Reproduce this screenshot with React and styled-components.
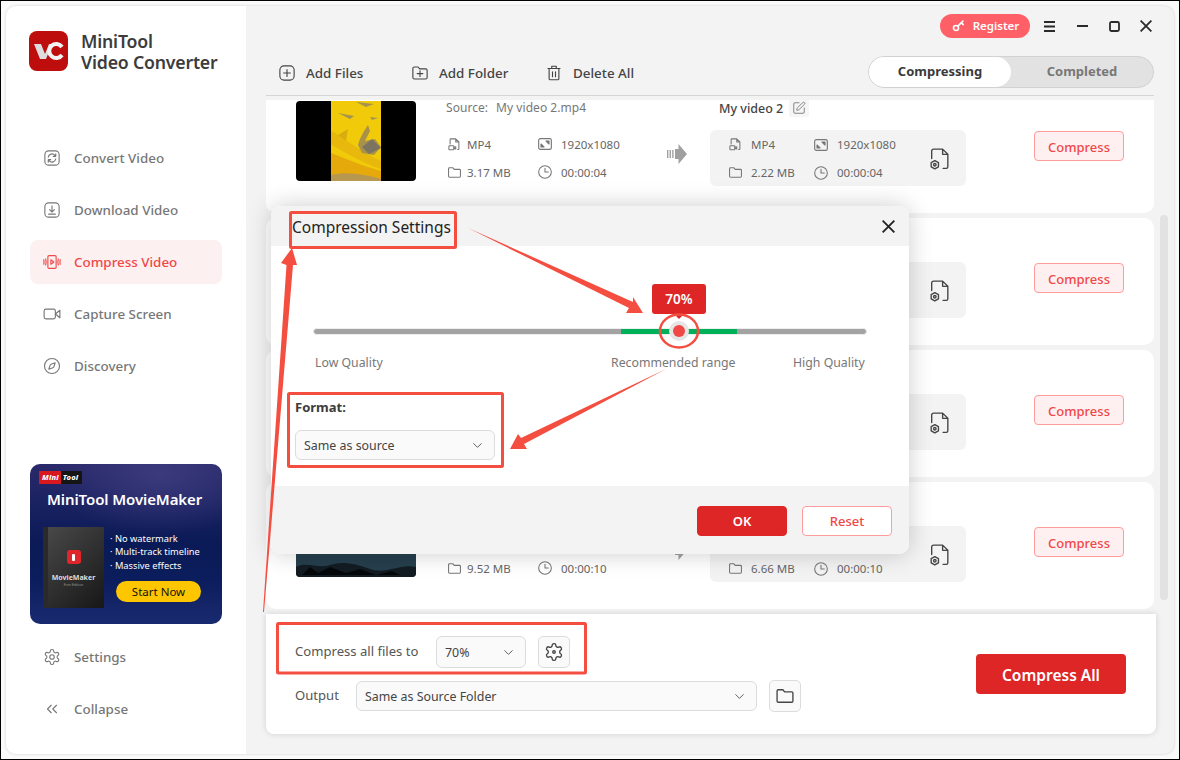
import React from "react";
import styled, { createGlobalStyle } from "styled-components";
import { ChevronDown, ChevronsLeft, SquarePen, Compass } from "lucide-react";

const FONT = `"Noto Sans", "Open Sans", Arial, sans-serif`;

const Global = createGlobalStyle`
  html, body { margin: 0; padding: 0; width: 1180px; height: 760px; overflow: hidden; background: #fff; }
  * { box-sizing: border-box; }
  body { font-family: ${FONT}; }
`;

const Frame = styled.div`
  position: relative; width: 1180px; height: 760px; padding: 6px;
  background: #fafafa; box-shadow: inset 0 0 0 1px #000; overflow: hidden;
`;
const Win = styled.div`
  display: flex; width: 100%; height: 100%; border-radius: 10px; overflow: hidden;
  background: #f3f3f3; box-shadow: 0 0 3px rgba(0,0,0,.18);
`;
const Sidebar = styled.aside`
  width: 240px; background: #fff; padding: 25px 24px 23px; display: flex; flex-direction: column; flex: none;
`;
const Brand = styled.div`display: flex; align-items: center; gap: 13px; height: 40px; margin-left: -1px;`;
const BrandName = styled.div`
  font-size: 17.7px; font-weight: 600; line-height: 21px; color: #3c3c3c; white-space: nowrap; letter-spacing: -.2px; padding-top: 1px;
`;
const Nav = styled.nav`display: flex; flex-direction: column; gap: 8px; margin-top: 65px;`;
const FootNav = styled(Nav)`margin-top: 0;`;
const NavItem = styled.div`
  display: flex; align-items: center; gap: 13px; height: 44px; padding-left: 13px; border-radius: 8px;
  font-size: 13.4px; font-weight: 500; white-space: nowrap;
  color: ${p => (p.$active ? "#f04747" : "#777")};
  background: ${p => (p.$active ? "#fdf0f0" : "transparent")};
  & > svg { flex: none; }
`;
const Banner = styled.div`
  margin-top: auto; margin-bottom: 11px; height: 160px; border-radius: 10px; overflow: hidden; color: #fff;
  padding: 7px 9px 0; display: flex; flex-direction: column;
  background:
    radial-gradient(ellipse 110px 60px at 130px 10px, #3a3a7c 0%, rgba(58,58,124,0) 100%),
    linear-gradient(180deg, #2a2a6b 0%, #0a1a56 50%, #0b1d5c 72%, #1a2a70 100%);
`;
const Badge = styled.div`display: flex; width: max-content; font-size: 7.5px; font-weight: 800; font-style: italic; line-height: 13px; letter-spacing: .2px;`;
const BadgeRed = styled.span`background: #d8181f; padding: 0 2px 0 3px;`;
const BadgeBlack = styled.span`background: #151515; padding: 0 4px 0 2px;`;
const BannerTitle = styled.div`font-size: 15px; font-weight: 600; margin: 5px 0 0 8px; line-height: 20px; white-space: nowrap; letter-spacing: -.1px;`;
const BannerRow = styled.div`display: flex; margin: 18px 0 0 4px;`;
const Box = styled.div`
  position: relative; width: 61px; height: 81px; flex: none; border-radius: 1px; display: flex; flex-direction: column; align-items: center;
  background: linear-gradient(135deg, #4a4a4a 0%, #333 45%, #171717 100%); padding-top: 23px;
  &::before { content: ""; position: absolute; left: 0; top: 0; bottom: 0; width: 5px; background: #2a2a2a; }
`;
const BoxIcon = styled.div`
  width: 14px; height: 14px; border-radius: 3px; background: #e0262a; display: flex; align-items: center; justify-content: center;
  &::after { content: ""; width: 3px; height: 7px; background: #fff; border-radius: 1px; }
`;
const BoxName = styled.div`font-size: 7px; font-weight: 700; margin-top: 9px; color: #ddd; line-height: 9px;`;
const BoxSub = styled.div`font-size: 3.5px; color: #999; line-height: 6px;`;
const Bullets = styled.div`margin-left: 6px; padding-top: 5px; display: flex; flex-direction: column; flex: 1;`;
const Bullet = styled.div`font-size: 9.3px; line-height: 13.4px; white-space: nowrap;`;
const StartNow = styled.div`
  width: 85px; height: 21px; border-radius: 11px; background: #fec600; color: #111; font-size: 11.5px;
  display: flex; align-items: center; justify-content: center; margin: 8.500px 0 0 6px;
`;
const Main = styled.main`
  flex: 1; min-width: 0; padding: 8px 20px 20px; display: flex; flex-direction: column;
`;
const TitleBar = styled.div`display: flex; justify-content: flex-end; align-items: center; height: 24px; margin-right: -8px;`;
const Register = styled.div`
  width: 90px; height: 24px; border-radius: 12px; background: #ff6068; color: #fff; font-size: 11.5px; font-weight: 600;
  display: flex; align-items: center; justify-content: center; gap: 7px; margin-right: 4px; padding-bottom: 1px;
`;
const WinBtn = styled.div`width: 32px; height: 24px; display: flex; align-items: center; justify-content: center; color: #2a2a2a;`;
const Toolbar = styled.div`
  display: flex; align-items: center; height: 40px; margin-top: 18px; padding: 0 0 7px 12px; border-bottom: 1px solid #d6d6d6;
`;
const ToolBtn = styled.div`
  display: flex; align-items: center; gap: 10px; width: ${p => p.$w}px; font-size: 13.4px; font-weight: 500; color: #444; white-space: nowrap; padding-top: 1px;
`;
const Tabs = styled.div`
  margin-left: auto; width: 286px; height: 32px; display: flex; border-radius: 16px; background: #e2e2e2; border: 1px solid #d2d2d2;
`;
const Tab = styled.div`
  width: 142px; border-radius: 16px; display: flex; align-items: center; justify-content: center; padding-bottom: 2px;
  font-size: 13px; font-weight: 700; color: ${p => (p.$active ? "#3a3a3a" : "#777")};
  background: ${p => (p.$active ? "#fff" : "transparent")};
`;
const ListArea = styled.div`position: relative; height: 510px; margin-top: 4px; display: flex; flex-direction: column;`;
const List = styled.div`overflow: hidden; height: 100%;`;
const ListInner = styled.div`display: flex; flex-direction: column; gap: 5px; margin-top: -14px;`;
const ScrollBar = styled.div`
  position: absolute; left: 894px; top: 115px; width: 8px; height: 385px; border-radius: 4px; background: #e2e2e2;
`;
const Card = styled.section`
  display: flex; align-items: flex-start; height: 127px; padding-left: 30px; background: #fff; border-radius: 10px; flex: none;
`;
const Thumb = styled.svg`width: 120px; height: 80px; margin-top: 15px; border-radius: 4px; flex: none; display: block;`;
const Column = styled.div`padding-top: 12px; flex: none; width: ${p => p.$w}px; margin-left: ${p => p.$ml || 0}px;`;
const SourceLine = styled.div`font-size: 12px; line-height: 20px; color: #777; height: 20px; white-space: nowrap; display: flex; gap: 8px; letter-spacing: .05px;`;
const OutName = styled.div`
  height: 20px; padding-left: 9px; display: flex; align-items: center; gap: 6px; font-size: 12.5px; font-weight: 500; color: #444; white-space: nowrap;
`;
const EditBox = styled.div`width: 20px; height: 18px; border-radius: 3px; background: #f5f5f5; color: #777; display: flex; align-items: center; justify-content: center;`;
const Meta = styled.div`
  display: grid; grid-template-columns: ${p => p.$cols}px auto; grid-auto-rows: 28px; margin-top: 12px; margin-left: 1px; width: max-content;
`;
const MetaItem = styled.div`
  display: flex; align-items: center; gap: ${p => p.$gap}px; font-size: 11.5px; color: #666; white-space: nowrap;
  & > svg { flex: none; color: #777; }
`;
const ArrowCell = styled.div`flex: none; width: 54px; padding: 58px 0 0 11px; color: #a0a0a0;`;
const OutPanel = styled.div`
  display: flex; align-items: center; height: 56px; margin-top: 12px; padding: 1px 14px 0 18px; border-radius: 6px; background: #f3f3f3;
`;
const OutMeta = styled(Meta)`margin: 0;`;
const CogWrap = styled.div`margin-left: auto; color: #444; display: flex;`;
const CompressBtn = styled.div`
  width: 90px; height: 30px; margin: 45px 0 0 68px; flex: none; border: 1px solid #ff9c9c; border-radius: 4px; background: #fef0f0; padding-top: 1px;
  color: #f04747; font-size: 13px; font-weight: 500; display: flex; align-items: center; justify-content: center;
`;
const Bottom = styled.div`
  height: 120px; margin: 4px -2px 0 0; background: #fff; border-radius: 0 0 8px 8px; display: flex; align-items: center; justify-content: space-between;
  padding: 0 30px 0 29px; box-shadow: 0 0 6px rgba(0,0,0,.14); position: relative; flex: none;
`;
const Rows = styled.div`display: flex; flex-direction: column; gap: 12px;`;
const FormRow = styled.div`display: flex; align-items: center; height: 32px;`;
const FieldLabel = styled.div`width: ${p => p.$w}px; font-size: 13.1px; color: #555; white-space: nowrap; flex: none; padding-bottom: 2px;`;
const Select = styled.div`
  width: ${p => p.$w}px; height: ${p => p.$h}px; flex: none; display: flex; align-items: center; justify-content: space-between;
  padding: 0 9px 0 8px; background: #fafafa; border: 1px solid #dcdcdc; border-radius: 6px; font-size: 12.4px; color: #444; white-space: nowrap;
  & > svg { color: #555; flex: none; }
`;
const SquareBtn = styled.div`
  width: 32px; height: 32px; margin-left: 12px; flex: none; background: #fafafa; border: 1px solid #dcdcdc; border-radius: 5px; color: #444;
  display: flex; align-items: center; justify-content: center;
`;
const CompressAll = styled.div`
  width: 150px; height: 40px; border-radius: 4px; background: #de2626; color: #fff; font-size: 15.5px; font-weight: 600; padding-top: 1px;
  display: flex; align-items: center; justify-content: center; white-space: nowrap;
`;
const Dialog = styled.div`
  position: absolute; left: 271px; top: 206px; width: 638px; height: 348px; border-radius: 10px; overflow: hidden; background: #fff;
  display: flex; flex-direction: column;
`;
const DialogShadow = styled.div`
  position: absolute; left: 271px; top: 206px; width: 638px; height: 348px; border-radius: 10px; box-shadow: 0 0 24px rgba(0,0,0,.2);
`;
const DHead = styled.div`
  height: 40px; flex: none; background: #f3f3f3; display: flex; align-items: center; justify-content: space-between; padding: 1px 14px 0 21px;
  font-size: 15.5px; color: #222; white-space: nowrap; font-weight: 400;
`;
const DBody = styled.div`height: 240px; flex: none; padding: 82px 42px 0 24px;`;
const TrackWrap = styled.div`position: relative; height: 7px; margin-left: 18px;`;
const Track = styled.div`
  height: 7px; border-radius: 4px; background: #a3a3a3; border: 1px solid #eee; position: relative; overflow: hidden;
`;
const GreenRange = styled.div`position: absolute; left: 307px; width: 116px; top: 0; bottom: 0; background: #00b15a;`;
const ThumbDot = styled.div`
  position: absolute; left: 356px; top: -7px; width: 20px; height: 20px; border-radius: 50%; background: #e6e6e6;
  display: flex; align-items: center; justify-content: center;
  &::after { content: ""; width: 12px; height: 12px; border-radius: 50%; background: #f04747; }
`;
const Tip = styled.div`
  position: absolute; left: 339px; top: -44px; width: 54px; height: 30px; border-radius: 3px; background: #de2626; color: #fff;
  font-size: 13.5px; font-weight: 600; display: flex; align-items: center; justify-content: center;
  &::after { content: ""; position: absolute; left: 22px; bottom: -5px; border-left: 5px solid transparent; border-right: 5px solid transparent; border-top: 5px solid #de2626; }
`;
const Scale = styled.div`
  display: grid; grid-template-columns: 296px 182px auto; margin: 19px 0 0 20px; font-size: 12.3px; line-height: 18px; color: #777; white-space: nowrap;
`;
const FormatLabel = styled.div`margin-top: 26px; font-size: 13px; line-height: 18px; font-weight: 700; color: #3c3c3c;`;
const FormatSelect = styled(Select)`margin-top: 14px;`;
const DFoot = styled.div`
  flex: 1; background: #f3f3f3; display: flex; justify-content: flex-end; gap: 15px; padding: 20px 17px 0 0;
`;
const DBtn = styled.div`
  width: 90px; height: 30px; border-radius: 4px; display: flex; align-items: center; justify-content: center; font-size: 13px;
  font-weight: ${p => (p.$primary ? 600 : 500)};
  color: ${p => (p.$primary ? "#fff" : "#f04747")};
  background: ${p => (p.$primary ? "#de2626" : "#fff")};
  border: 1px solid ${p => (p.$primary ? "#de2626" : "#ff9c9c")};
`;
const Overlay = styled.svg`position: absolute; left: 0; top: 0; width: 1180px; height: 760px; pointer-events: none;`;

const GEAR = "M12.22 2h-.44a2 2 0 0 0-2 2v.18a2 2 0 0 1-1 1.73l-.43.25a2 2 0 0 1-2 0l-.15-.08a2 2 0 0 0-2.73.73l-.22.38a2 2 0 0 0 .73 2.73l.15.1a2 2 0 0 1 1 1.72v.51a2 2 0 0 1-1 1.74l-.15.09a2 2 0 0 0-.73 2.73l.22.38a2 2 0 0 0 2.73.73l.15-.08a2 2 0 0 1 2 0l.43.25a2 2 0 0 1 1 1.73V20a2 2 0 0 0 2 2h.44a2 2 0 0 0 2-2v-.18a2 2 0 0 1 1-1.73l.43-.25a2 2 0 0 1 2 0l.15.08a2 2 0 0 0 2.73-.73l.22-.39a2 2 0 0 0-.73-2.73l-.15-.08a2 2 0 0 1-1-1.74v-.5a2 2 0 0 1 1-1.74l.15-.09a2 2 0 0 0 .73-2.73l-.22-.38a2 2 0 0 0-2.73-.73l-.15.08a2 2 0 0 1-2 0l-.43-.25a2 2 0 0 1-1-1.73V4a2 2 0 0 0-2-2z";

const Ic = ({ s = 18, w = 1.5, children, ...r }) => (
  <svg width={s} height={s} viewBox="0 0 24 24" fill="none" stroke="currentColor" strokeWidth={w} strokeLinecap="round" strokeLinejoin="round" {...r}>{children}</svg>
);
const ConvertIc = () => <Ic><rect x="2.5" y="2.5" width="19" height="19" rx="5" /><path d="M7 11a5 5 0 0 1 8.8-2.6l1.2 1.300M17 6.500v3.300h-3.300M17 13a5 5 0 0 1-8.800 2.600L7 14.300M7 17.500v-3.300h3.300" /></Ic>;
const DownloadIc = () => <Ic><rect x="2.5" y="2.5" width="19" height="19" rx="5" /><path d="M12 6.500v8M8.800 11.500l3.200 3.200 3.200-3.200M7.500 17.500h9" /></Ic>;
const CompressIc = () => <Ic><rect x="6.5" y="3.5" width="11" height="17" rx="1.5" /><path d="M10.500 9v6l4-3zM3.500 8c1 2.600 1 5.400 0 8M1 9c.6 2 .6 4 0 6M20.500 8c-1 2.600-1 5.400 0 8M23 9c-.6 2-.6 4 0 6" /></Ic>;
const CaptureIc = () => <Ic><rect x="1.5" y="5.5" width="15" height="13" rx="2.5" /><path d="M16.500 12l6-5v10z" /></Ic>;
const GearIc = ({ s = 18, w = 1.5, r = 3 }) => <Ic s={s} w={w}><path d={GEAR} /><circle cx="12" cy="12" r={r} /></Ic>;
const AddFileIc = () => <Ic><rect x="2.5" y="2.5" width="19" height="19" rx="5.5" /><path d="M12 7.500v9M7.500 12h9" /></Ic>;
const AddFolderIc = () => <Ic><path d="M2.500 6a2 2 0 0 1 2-2h5l2 2.500h8a2 2 0 0 1 2 2V18a2 2 0 0 1-2 2h-15a2 2 0 0 1-2-2z" /><path d="M12 9v7.500M8.200 12.800h7.600" /></Ic>;
const TrashIc = () => <Ic><path d="M4 6h16M9 6V3h6v3M5.500 6v13.500a1.500 1.500 0 0 0 1.500 1.500h10a1.500 1.500 0 0 0 1.500-1.500V6M10 10.500v6.500M14 10.500v6.500" /></Ic>;
const FileVid = () => <Ic s={15} w={1.7}><path d="M5 11V4a1 1 0 0 1 1-1h8l5 5v11a1 1 0 0 1-1 1h-1M14 3v5h5" /><rect x="3" y="14" width="8" height="6.5" rx="1" /><path d="M11 16.500l3-1v3.500l-3-1" /></Ic>;
const ResizeIc = () => <Ic s={16} w={1.7}><rect x="2.500" y="4" width="19" height="16" rx="2.500" /><path d="M13.500 7.500h4.500V12zM10.500 16.500H6V12z" fill="currentColor" /></Ic>;
const FolderIc = ({ s = 15, w = 1.7 }) => <Ic s={s} w={w}><path d="M2.500 6a1.500 1.500 0 0 1 1.500-1.500h5.500l2 2.500h8.500a1.500 1.500 0 0 1 1.500 1.500V18a1.500 1.500 0 0 1-1.500 1.500H4A1.500 1.500 0 0 1 2.500 18z" /></Ic>;
const ClockIc = () => <Ic s={16} w={1.6}><circle cx="12" cy="12" r="9.500" /><path d="M12 6.500V12h5" /></Ic>;
const FlowArrow = () => (
  <svg width="20" height="20" viewBox="0 0 20 20" fill="currentColor">
    <rect x="0" y="6" width="1.400" height="8" /><rect x="2.600" y="6" width="1.400" height="8" /><rect x="5.200" y="6" width="1.400" height="8" />
    <path d="M8 5h3.500V0L20 10l-8.500 10v-5H8z" />
  </svg>
);
const FileCog = () => (
  <Ic s={25} w={1.3}>
    <path d="M4.500 12V5a2 2 0 0 1 2-2h8.500l5 5v12a1.500 1.500 0 0 1-1.500 1.500H15.500M15 3v5h5" />
    <path d="M7.500 14l3.500 2v4l-3.500 2L4 20v-4z" />
    <circle cx="7.500" cy="18" r="1.200" />
  </Ic>
);
const KeyIc = () => <Ic s={15} w={2.6}><circle cx="8" cy="16" r="4" /><path d="M11 13l8-8M16.500 7.500l3 3" /></Ic>;
const MenuIc = () => <svg width="12" height="11" viewBox="0 0 12 11" fill="#2a2a2a"><rect width="11" height="2" y="0" /><rect width="11" height="2" y="4.500" /><rect width="11" height="2" y="9" /></svg>;
const MinIc = () => <svg width="11" height="3" fill="#2a2a2a"><rect width="11" height="2" /></svg>;
const MaxIc = () => <svg width="11" height="11" viewBox="0 0 11 11" fill="none" stroke="#2a2a2a" strokeWidth="1.800"><rect x="1" y="1" width="9" height="9" rx="1.500" /></svg>;
const CrossIc = ({ s = 12, w = 1.800 }) => <svg width={s} height={s} viewBox="0 0 12 12" fill="none" stroke="currentColor" strokeWidth={w}><path d="M.6.6l10.800 10.800M11.400.6L.6 11.400" /></svg>;
const Logo = () => (
  <svg width="39" height="40" viewBox="0 0 39 40" style={{ flex: "none" }}>
    <rect width="39" height="40" rx="8" fill="#bd0d0d" />
    <path d="M5 13h7l4 10 4-10h3l-6 15h-6z" fill="#ddd" />
    <path d="M33 16a7 7 0 1 0 0 8" fill="none" stroke="#f2f2f2" strokeWidth="4" />
  </svg>
);
const GoldThumb = () => (
  <Thumb viewBox="0 0 120 80" preserveAspectRatio="none">
    <rect width="120" height="80" fill="#000" />
    <rect x="35" width="50" height="80" fill="#f1cb0a" />
    <path d="M35 52C50 58 70 66 85 70V80H35z" fill="#e5a90b" />
    <path d="M35 74C50 70 70 74 85 78V80H35z" fill="#b8974e" />
    <path d="M35 30C45 34 60 48 85 60V68C65 62 48 50 35 44z" fill="#e8b80c" />
    <path d="M62 44c2-8 6-14 10-20l2 6-5 10 10-2 6 8-7 8-12-2z" fill="#a8924a" />
    <path d="M66 46l10-8 9 9-12 6z" fill="#7c7460" />
    <path d="M42 12l16 3-4 3zM60 1l18 2-8 3zM74 16l8 1-6 2z" fill="#a59450" />
    <path d="M42 34l10-6-2 12z" fill="#d9ad10" />
  </Thumb>
);
const DarkThumb = () => (
  <Thumb viewBox="0 0 120 80" preserveAspectRatio="none">
    <rect width="120" height="80" fill="#263f4e" />
    <path d="M0 70C10 64 22 72 34 68S58 66 74 72 104 66 120 70V80H0z" fill="#121c22" />
    <path d="M6 78l8-8 8 6 12-6 16 6 14-4 16 6 16-4 8 4H6z" fill="#05080a" />
  </Thumb>
);

const Row = ({ thumb, source, name, inSize, outSize, dur }) => (
  <Card>
    {thumb === "gold" ? <GoldThumb /> : <DarkThumb />}
    <Column $w={210} $ml={30}>
      {source ? <SourceLine><span>Source:</span><span>{source}</span></SourceLine> : <SourceLine />}
      {inSize && (
        <Meta $cols={90}>
          <MetaItem $gap={5}><FileVid />MP4</MetaItem>
          <MetaItem $gap={8}><ResizeIc />1920x1080</MetaItem>
          <MetaItem $gap={5}><FolderIc />{inSize}</MetaItem>
          <MetaItem $gap={8}><ClockIc />{dur}</MetaItem>
        </Meta>
      )}
    </Column>
    <ArrowCell><FlowArrow /></ArrowCell>
    <Column $w={256}>
      {name ? <OutName>{name}<EditBox><SquarePen size={14} strokeWidth={1.500} /></EditBox></OutName> : <OutName />}
      <OutPanel>
        {outSize && (
          <OutMeta $cols={85}>
            <MetaItem $gap={8}><FileVid />MP4</MetaItem>
            <MetaItem $gap={8}><ResizeIc />1920x1080</MetaItem>
            <MetaItem $gap={8}><FolderIc />{outSize}</MetaItem>
            <MetaItem $gap={8}><ClockIc />{dur}</MetaItem>
          </OutMeta>
        )}
        <CogWrap><FileCog /></CogWrap>
      </OutPanel>
    </Column>
    <CompressBtn>Compress</CompressBtn>
  </Card>
);

export default function App() {
  return (
    <Frame>
      <Global />
      <Win>
        <Sidebar>
          <Brand><Logo /><BrandName>MiniTool<br />Video Converter</BrandName></Brand>
          <Nav>
            <NavItem><ConvertIc />Convert Video</NavItem>
            <NavItem><DownloadIc />Download Video</NavItem>
            <NavItem $active><CompressIc />Compress Video</NavItem>
            <NavItem><CaptureIc />Capture Screen</NavItem>
            <NavItem><Compass size={18} strokeWidth={1.500} />Discovery</NavItem>
          </Nav>
          <Banner>
            <Badge><BadgeRed>Mini</BadgeRed><BadgeBlack>Tool</BadgeBlack></Badge>
            <BannerTitle>MiniTool MovieMaker</BannerTitle>
            <BannerRow>
              <Box><BoxIcon /><BoxName>MovieMaker</BoxName><BoxSub>Free Edition</BoxSub></Box>
              <Bullets>
                <Bullet>· No watermark</Bullet>
                <Bullet>· Multi-track timeline</Bullet>
                <Bullet>· Massive effects</Bullet>
                <StartNow>Start Now</StartNow>
              </Bullets>
            </BannerRow>
          </Banner>
          <FootNav as="div">
            <NavItem><GearIc r={3} />Settings</NavItem>
            <NavItem><ChevronsLeft size={18} strokeWidth={1.500} />Collapse</NavItem>
          </FootNav>
        </Sidebar>
        <Main>
          <TitleBar>
            <Register><KeyIc />Register</Register>
            <WinBtn><MenuIc /></WinBtn>
            <WinBtn><MinIc /></WinBtn>
            <WinBtn><MaxIc /></WinBtn>
            <WinBtn><CrossIc /></WinBtn>
          </TitleBar>
          <Toolbar>
            <ToolBtn $w={133}><AddFileIc />Add Files</ToolBtn>
            <ToolBtn $w={134}><AddFolderIc />Add Folder</ToolBtn>
            <ToolBtn $w={110}><TrashIc />Delete All</ToolBtn>
            <Tabs><Tab $active>Compressing</Tab><Tab>Completed</Tab></Tabs>
          </Toolbar>
          <ListArea>
            <List>
              <ListInner>
                <Row thumb="gold" source="My video 2.mp4" name="My video 2" inSize="3.17 MB" outSize="2.22 MB" dur="00:00:04" />
                <Row thumb="dark" />
                <Row thumb="dark" />
                <Row thumb="dark" inSize="9.52 MB" outSize="6.66 MB" dur="00:00:10" />
              </ListInner>
            </List>
            <ScrollBar />
          </ListArea>
          <Bottom>
            <Rows>
              <FormRow>
                <FieldLabel $w={141}>Compress all files to</FieldLabel>
                <Select $w={90} $h={32}>70%<ChevronDown size={15} strokeWidth={1.500} /></Select>
                <SquareBtn><GearIc s={20} w={1.600} r={1.500} /></SquareBtn>
              </FormRow>
              <FormRow>
                <FieldLabel $w={61}>Output</FieldLabel>
                <Select $w={401} $h={30}>Same as Source Folder<ChevronDown size={15} strokeWidth={1.500} /></Select>
                <SquareBtn><FolderIc s={20} w={1.600} /></SquareBtn>
              </FormRow>
            </Rows>
            <CompressAll>Compress All</CompressAll>
          </Bottom>
        </Main>
      </Win>

      <DialogShadow />
      <Dialog>
        <DHead>Compression Settings<CrossIc s={13} w={1.700} /></DHead>
        <DBody>
          <TrackWrap>
            <Track><GreenRange /></Track>
            <ThumbDot />
            <Tip>70%</Tip>
          </TrackWrap>
          <Scale><span>Low Quality</span><span>Recommended range</span><span>High Quality</span></Scale>
          <FormatLabel>Format:</FormatLabel>
          <FormatSelect $w={200} $h={30}>Same as source<ChevronDown size={15} strokeWidth={1.500} /></FormatSelect>
        </DBody>
        <DFoot><DBtn $primary>OK</DBtn><DBtn>Reset</DBtn></DFoot>
      </Dialog>

      <Overlay viewBox="0 0 1180 760">
        <g fill="none" stroke="#f44e41" strokeWidth="3">
          <rect x="290.500" y="212.500" width="165" height="35" rx="1" />
          <rect x="288.500" y="393.500" width="214" height="73" rx="1" />
          <rect x="277.500" y="623.500" width="308" height="49.500" rx="1" />
          <ellipse cx="679" cy="331" rx="19" ry="16.500" strokeWidth="2.500" />
        </g>
        <g fill="#f44e41">
          <polygon points="468,228 633,302 633,297 643,313 626,313 629,308" />
          <polygon points="666,369 521,438 518,434 510,449 527,449 524,444" />
          <polygon points="292,248 281,263 286.500,265 263,612 264,612 293,265 297,265" />
        </g>
      </Overlay>
    </Frame>
  );
}
